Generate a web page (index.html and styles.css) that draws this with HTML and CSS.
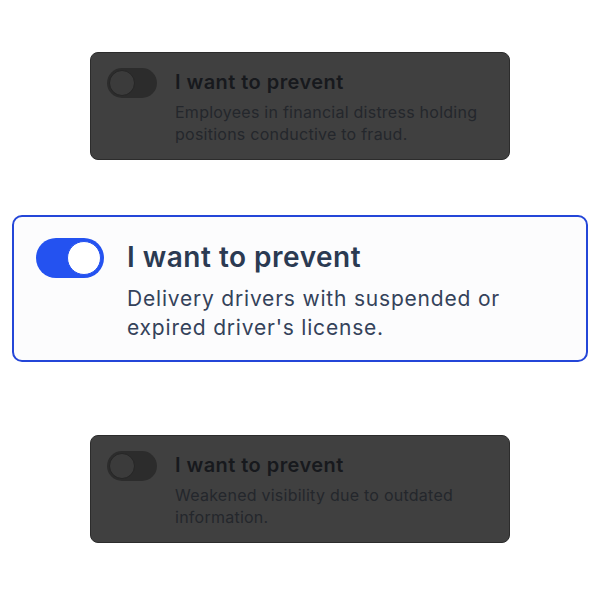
FILE: index.html
```html
<!DOCTYPE html>
<html>
<head>
<meta charset="utf-8">
<link rel="stylesheet" href="styles.css">
</head>
<body>
<main class="stack">
  <div class="card card-dim card-first">
    <span class="toggle toggle-off"><span class="knob"></span></span>
    <div class="text">
      <h3 class="title">I want to prevent</h3>
      <p class="desc">Employees in financial distress holding positions conductive to fraud.</p>
    </div>
  </div>
  <div class="card card-active">
    <span class="toggle toggle-on"><span class="knob"></span></span>
    <div class="text">
      <h3 class="title">I want to prevent</h3>
      <p class="desc">Delivery drivers with suspended or expired driver's license.</p>
    </div>
  </div>
  <div class="card card-dim card-last">
    <span class="toggle toggle-off"><span class="knob"></span></span>
    <div class="text">
      <h3 class="title">I want to prevent</h3>
      <p class="desc">Weakened visibility due to outdated information.</p>
    </div>
  </div>
</main>
</body>
</html>
```
FILE: styles.css
```css
* { box-sizing: border-box; }
html, body { margin: 0; padding: 0; background: #ffffff; }
body { font-family: Inter, "Noto Sans", sans-serif; width: 600px; height: 600px; overflow: hidden; }

.stack {
  display: flex;
  flex-direction: column;
  align-items: center;
  padding-top: 52px;
}

.card {
  display: flex;
  align-items: flex-start;
}
.title { margin: 0; font-weight: 600; }
.desc { margin: 0; }

.card-dim {
  width: 420px;
  height: 108px;
  background: #404040;
  border: 1px solid #2c2c2c;
  border-radius: 8px;
  padding: 15px 16px;
  gap: 18px;
}
.card-dim .title { font-size: 20px; line-height: 28px; color: #17191d; letter-spacing: 0.45px; }
.card-dim .desc { font-size: 16px; line-height: 22px; color: #24272c; margin-top: 5px; letter-spacing: 0.25px; }

.card-active {
  width: 576px;
  height: 147px;
  margin-top: 55px;
  margin-bottom: 73px;
  background: #fcfcfd;
  border: 2px solid #2446d8;
  border-radius: 10px;
  padding: 21px 22px;
  gap: 23px;
}
.card-active .title { font-size: 28px; line-height: 38px; color: #2b3a52; letter-spacing: 0.5px; }
.card-active .desc { font-size: 21px; line-height: 29px; color: #34425a; margin-top: 8px; letter-spacing: 0.8px; }

.toggle {
  flex: none;
  display: flex;
  align-items: center;
  border-radius: 999px;
}
.toggle-off {
  width: 50px;
  height: 30px;
  background: #2c2c2c;
  padding: 2px;
  justify-content: flex-start;
}
.toggle-off .knob {
  width: 26px;
  height: 26px;
  border-radius: 50%;
  background: #3b3b3b;
  border: 1px solid #262626;
}
.toggle-on {
  width: 68px;
  height: 40px;
  background: #2452f0;
  padding: 3px;
  justify-content: flex-end;
}
.toggle-on .knob {
  width: 34px;
  height: 34px;
  border-radius: 50%;
  background: #ffffff;
  border: 1.5px solid #2452f0;
}
```
